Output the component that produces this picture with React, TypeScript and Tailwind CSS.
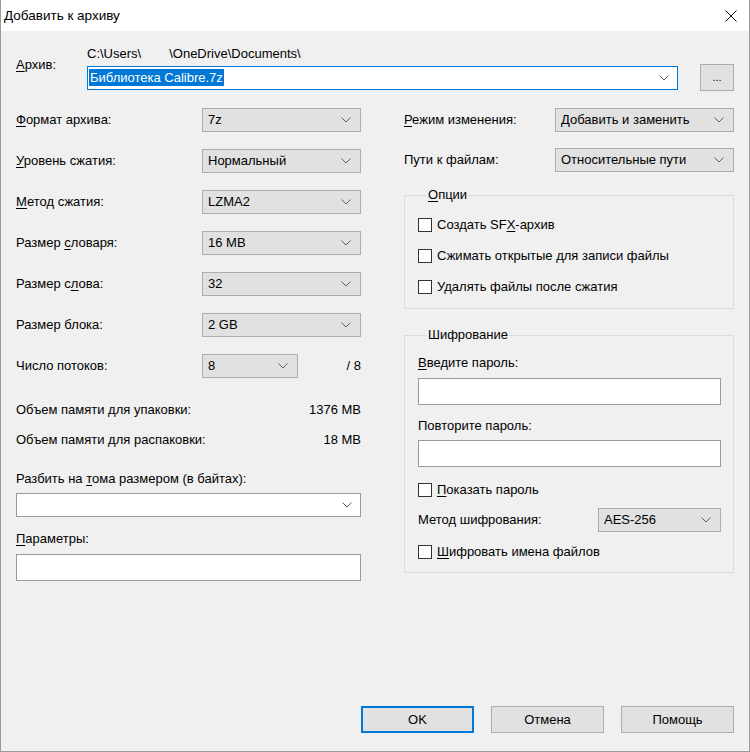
import React from 'react';

const font = { fontFamily: '"Liberation Sans", Arial, sans-serif' };

const Chevron = () => (
  <svg width="10" height="6" viewBox="0 0 10 6" className="shrink-0">
    <polyline points="0.5,0.5 5,5 9.5,0.5" fill="none" stroke="#606060" strokeWidth="1" />
  </svg>
);

// метка с подчёркнутой буквой (клавиша доступа)
const Lbl = ({ pre = '', acc = '', post = '' }: { pre?: string; acc?: string; post?: string }) => (
  <span className="whitespace-nowrap">
    {pre}
    {acc && <span className="underline underline-offset-2">{acc}</span>}
    {post}
  </span>
);

const Combo = ({ value, w }: { value: string; w: string }) => (
  <div className={`flex h-[24px] items-center border border-[#adadad] bg-[#e1e1e1] pl-[5px] pr-[9px] ${w}`}>
    <span className="flex-1 truncate">{value}</span>
    <Chevron />
  </div>
);

const Check = ({ children }: { children: React.ReactNode }) => (
  <div className="flex h-[16px] items-center gap-[5px]">
    <div className="h-[14px] w-[14px] shrink-0 border border-[#333333] bg-white" />
    {children}
  </div>
);

const Field = () => <div className="h-[27px] w-full border border-[#9a9a9a] bg-white" />;

const LeftRow = ({ label, value }: { label: React.ReactNode; value: string }) => (
  <div className="flex h-[24px] items-center">
    <div className="w-[186px]">{label}</div>
    <Combo value={value} w="w-[159px]" />
  </div>
);

const App = () => {
  return (
    <div
      className="flex h-[752px] w-[750px] flex-col border-x border-b border-[#9a9a9a] bg-[#f0f0f0] text-[13px] leading-[16px] text-black"
      style={font}
    >
      {/* заголовок окна */}
      <div className="flex h-[31px] shrink-0 items-center justify-between bg-white pl-[3px] pr-[12px]">
        <span className="text-[13.5px]">Добавить к архиву</span>
        <svg width="12" height="12" viewBox="0 0 12 12">
          <path d="M0.5 0.5 L11.5 11.5 M11.5 0.5 L0.5 11.5" stroke="#111" strokeWidth="1" />
        </svg>
      </div>

      <div className="flex flex-1 flex-col pl-[15px] pr-[15px]">
        {/* Архив */}
        <div className="mt-[15px] flex">
          <div className="w-[71px] pt-[11px]">
            <Lbl acc="А" post="рхив:" />
          </div>
          <div className="flex w-[591px] flex-col">
            <div className="flex h-[16px] items-center">
              <span>{'C:\\Users\\'}</span>
              <span className="ml-[28px]">{'\\OneDrive\\Documents\\'}</span>
            </div>
            <div className="mt-[4px] flex h-[24px] items-center border border-[#0078d7] bg-white pl-[1px] pr-[8px]">
              <div className="flex-1">
                <span className="bg-[#0078d7] px-[1px] py-[1px] text-white">Библиотека Calibre.7z</span>
              </div>
              <Chevron />
            </div>
          </div>
          <div className="ml-[22px] mt-[18px] flex h-[27px] w-[34px] items-center justify-center border border-[#adadad] bg-[#e1e1e1] pb-[2px] text-[11px]">
            ...
          </div>
        </div>

        <div className="mt-[17px] flex">
          {/* левая колонка */}
          <div className="flex w-[345px] flex-col">
            <div className="flex flex-col gap-[17px]">
              <LeftRow label={<Lbl acc="Ф" post="ормат архива:" />} value="7z" />
              <LeftRow label={<Lbl acc="У" post="ровень сжатия:" />} value="Нормальный" />
              <LeftRow label={<Lbl acc="М" post="етод сжатия:" />} value="LZMA2" />
              <LeftRow label={<Lbl pre="Размер " acc="с" post="ловаря:" />} value="16 MB" />
              <LeftRow label={<Lbl pre="Размер с" acc="л" post="ова:" />} value="32" />
              <LeftRow label={<Lbl pre="Размер блока:" />} value="2 GB" />
              <div className="flex h-[24px] items-center">
                <div className="w-[186px]">Число потоков:</div>
                <Combo value="8" w="w-[96px]" />
                <div className="flex-1 text-right">/ 8</div>
              </div>
            </div>

            <div className="mt-[24px] flex h-[16px] items-center justify-between">
              <span>Объем памяти для упаковки:</span>
              <span>1376 MB</span>
            </div>
            <div className="mt-[14px] flex h-[16px] items-center justify-between">
              <span>Объем памяти для распаковки:</span>
              <span>18 MB</span>
            </div>

            <div className="mt-[23px] h-[16px]">
              <Lbl pre="Разбить на " acc="т" post="ома размером (в байтах):" />
            </div>
            <div className="mt-[6px] flex h-[24px] items-center justify-end border border-[#9a9a9a] bg-white pr-[8px]">
              <Chevron />
            </div>

            <div className="mt-[14px] h-[16px]">
              <Lbl acc="П" post="араметры:" />
            </div>
            <div className="mt-[7px]">
              <Field />
            </div>
          </div>

          {/* правая колонка */}
          <div className="ml-[43px] flex w-[330px] flex-col">
            <div className="flex h-[24px] items-center justify-between">
              <Lbl acc="Р" post="ежим изменения:" />
              <Combo value="Добавить и заменить" w="w-[179px]" />
            </div>
            <div className="mt-[16px] flex h-[24px] items-center justify-between">
              <span>Пути к файлам:</span>
              <Combo value="Относительные пути" w="w-[179px]" />
            </div>

            <fieldset className="mt-[15px] border border-[#dcdcdc] pb-[13px] pl-[13px] pr-[12px]">
              <legend className="ml-[9px] px-[1px] leading-[16px]">
                <Lbl acc="О" post="пции" />
              </legend>
              <div className="mt-[14px] flex flex-col gap-[15px]">
                <Check>
                  <Lbl pre="Создать SF" acc="X" post="-архив" />
                </Check>
                <Check>
                  <span>Сжимать открытые для записи файлы</span>
                </Check>
                <Check>
                  <span>Удалять файлы после сжатия</span>
                </Check>
              </div>
            </fieldset>

            <fieldset className="mt-[18px] border border-[#dcdcdc] pb-[12px] pl-[13px] pr-[12px]">
              <legend className="ml-[9px] px-[1px] leading-[16px]">Шифрование</legend>
              <div className="mt-[12px] h-[16px]">
                <Lbl acc="В" post="ведите пароль:" />
              </div>
              <div className="mt-[7px]">
                <Field />
              </div>
              <div className="mt-[13px] h-[16px]">Повторите пароль:</div>
              <div className="mt-[6px]">
                <Field />
              </div>
              <div className="mt-[15px]">
                <Check>
                  <Lbl acc="П" post="оказать пароль" />
                </Check>
              </div>
              <div className="mt-[10px] flex h-[24px] items-center justify-between">
                <span>Метод шифрования:</span>
                <Combo value="AES-256" w="w-[123px]" />
              </div>
              <div className="mt-[12px]">
                <Check>
                  <Lbl acc="Ш" post="ифровать имена файлов" />
                </Check>
              </div>
            </fieldset>
          </div>
        </div>

        <div className="flex-1" />

        {/* кнопки */}
        <div className="mb-[18px] flex justify-end gap-[17px]">
          <button className="h-[27px] w-[113px] border-2 border-[#0078d7] bg-[#e1e1e1]">OK</button>
          <button className="h-[27px] w-[113px] border border-[#adadad] bg-[#e1e1e1]">Отмена</button>
          <button className="h-[27px] w-[113px] border border-[#adadad] bg-[#e1e1e1]">Помощь</button>
        </div>
      </div>
    </div>
  );
};

export default App;
